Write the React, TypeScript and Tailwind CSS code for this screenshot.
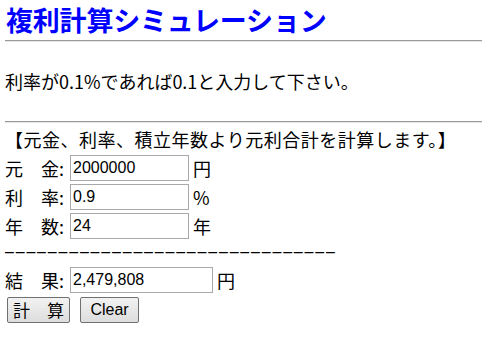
import React from "react";

const jp = { fontFamily: '"Noto Sans CJK JP", "Noto Sans", sans-serif' };

function Row({ label, value, unit, w }: { label: string; value: string; unit: string; w: string }) {
  return (
    <div className="flex items-center h-[26px]">
      <span className="w-[65px] text-[18px] leading-[26px] text-black whitespace-pre" style={jp}>{label}</span>
      <input
        readOnly
        value={value}
        className={`${w} h-[26px] border border-[#a9a9a9] bg-white px-[2px] text-[16px] text-black outline-none font-['Liberation_Sans',Arial,sans-serif]`}
      />
      <span className="ml-[4px] text-[18px] leading-[26px] text-black" style={jp}>{unit}</span>
    </div>
  );
}

export default function App() {
  return (
    <div className="w-[482px] h-[353px] bg-white overflow-hidden pl-[5px]">
      <h1
        className="leading-[40px] text-[27px] font-bold text-[#0000ff] pl-[1px] tracking-[-0.2px] whitespace-nowrap"
        style={jp}
      >
        複利計算シミュレーション
      </h1>
      <div className="h-[2px] border-t border-[#9a9a9a] border-b border-b-[#e6e6e6]" />
      <div className="mt-[27px] h-[24px] leading-[24px] text-[18px] text-black whitespace-nowrap" style={jp}>
        利率が0.1%であれば0.1と入力して下さい。
      </div>
      <div className="mt-[28px] h-[2px] border-t border-[#9a9a9a] border-b border-b-[#e6e6e6]" />
      <div className="mt-[4px] h-[24px] leading-[24px] text-[18px] text-black tracking-[0.5px] whitespace-nowrap" style={jp}>
        【元金、利率、積立年数より元利合計を計算します。】
      </div>
      <div className="mt-[4px] flex flex-col gap-[3px]">
        <Row label={"元\u3000金:"} value="2000000" unit="円" w="w-[119px]" />
        <Row label={"利\u3000率:"} value="0.9" unit="%" w="w-[119px]" />
        <Row label={"年\u3000数:"} value="24" unit="年" w="w-[119px]" />
      </div>
      <div className="h-[26px] flex items-end pb-[5px]">
        <span className="leading-[16px] text-[16px] text-black font-['Liberation_Sans',Arial,sans-serif] whitespace-nowrap tracking-[1.8px]">
          {"–".repeat(31)}
        </span>
      </div>
      <div className="mt-[2px]">
        <Row label={"結\u3000果:"} value="2,479,808" unit="円" w="w-[143px]" />
      </div>
      <div className="mt-[4px] flex gap-[10px] pl-[2px]">
        <button
          className="w-[63px] h-[26px] border border-[#707070] rounded-[2px] bg-gradient-to-b from-[#f2f2f2] to-[#dddddd] text-[17px] leading-[22px] text-black"
          style={jp}
        >
          {"計\u3000算"}
        </button>
        <button className="w-[59px] h-[26px] border border-[#707070] rounded-[2px] bg-gradient-to-b from-[#f2f2f2] to-[#dddddd] text-[16px] leading-[22px] text-black font-['Liberation_Sans',Arial,sans-serif]">
          Clear
        </button>
      </div>
    </div>
  );
}
